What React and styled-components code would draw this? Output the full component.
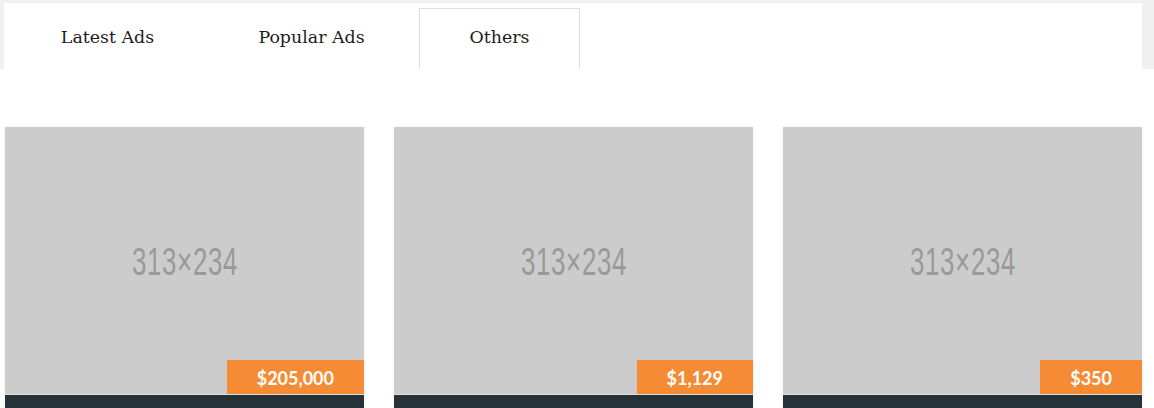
import React from "react";
import styled, { createGlobalStyle } from "styled-components";

const Global = createGlobalStyle`
  html, body { margin: 0; padding: 0; background: #ffffff; }
  body { font-family: "Liberation Sans", Arial, sans-serif; overflow: hidden; }
`;

const Page = styled.div`
  width: 1154px;
  height: 408px;
  overflow: hidden;
  background: #fff;
`;

const TabShell = styled.div`
  background: #f0f0f0;
  padding: 3px 12px 0 4px;
`;

const TabBar = styled.ul`
  list-style: none;
  margin: 0;
  padding: 5px 0 0 7px;
  height: 61px;
  background: #fff;
  display: flex;
  gap: 4px;
`;

const Tab = styled.li`
  box-sizing: border-box;
  flex: 0 0 ${(p) => p.$w}px;
  height: 61px;
  padding: 0 0 4px;
  border: 1px solid ${(p) => (p.$active ? "#dddddd" : "transparent")};
  border-bottom: none;
  display: flex;
  align-items: center;
  justify-content: center;
  font-family: "DejaVu Serif", "Liberation Serif", serif;
  font-size: 17.4px;
  color: #1c1c1c;
  white-space: nowrap;
`;

const Grid = styled.div`
  display: grid;
  grid-template-columns: repeat(3, 359px);
  column-gap: 30px;
  padding: 58px 0 0 5px;
`;

const Card = styled.div`
  background: #fff;
  box-shadow: 0 0 4px rgba(0, 0, 0, 0.06);
`;

const Thumb = styled.div`
  position: relative;
  height: 267px;
  background: #cccccc;
  display: flex;
  align-items: center;
  justify-content: center;
  border-bottom: 1px solid #dedede;
`;

const Placeholder = styled.span`
  display: inline-block;
  font-family: "Liberation Sans", Arial, sans-serif;
  font-size: 38px;
  color: #999999;
  transform: scaleX(0.68);
  letter-spacing: 1px;
  margin-top: 4px;
`;

const Price = styled.span`
  position: absolute;
  right: 0;
  bottom: 0;
  height: 34px;
  padding: 1px 30px 0;
  background: #f58b35;
  color: #fff;
  font-family: "Lato", "Liberation Sans", sans-serif;
  font-weight: 700;
  font-size: 18px;
  display: flex;
  align-items: center;
  box-sizing: border-box;
`;

const Footer = styled.div`
  height: 40px;
  background: #253238;
`;

const tabs = [
  { label: "Latest Ads", w: 193 },
  { label: "Popular Ads", w: 207 },
  { label: "Others", w: 161, active: true },
];

const ads = ["$205,000", "$1,129", "$350"];

export default function App() {
  return (
    <Page>
      <Global />
      <TabShell>
        <TabBar>
          {tabs.map((t) => (
            <Tab key={t.label} $active={t.active} $w={t.w}>
              {t.label}
            </Tab>
          ))}
        </TabBar>
      </TabShell>
      <Grid>
        {ads.map((p) => (
          <Card key={p}>
            <Thumb>
              <Placeholder>313×234</Placeholder>
              <Price>{p}</Price>
            </Thumb>
            <Footer />
          </Card>
        ))}
      </Grid>
    </Page>
  );
}
